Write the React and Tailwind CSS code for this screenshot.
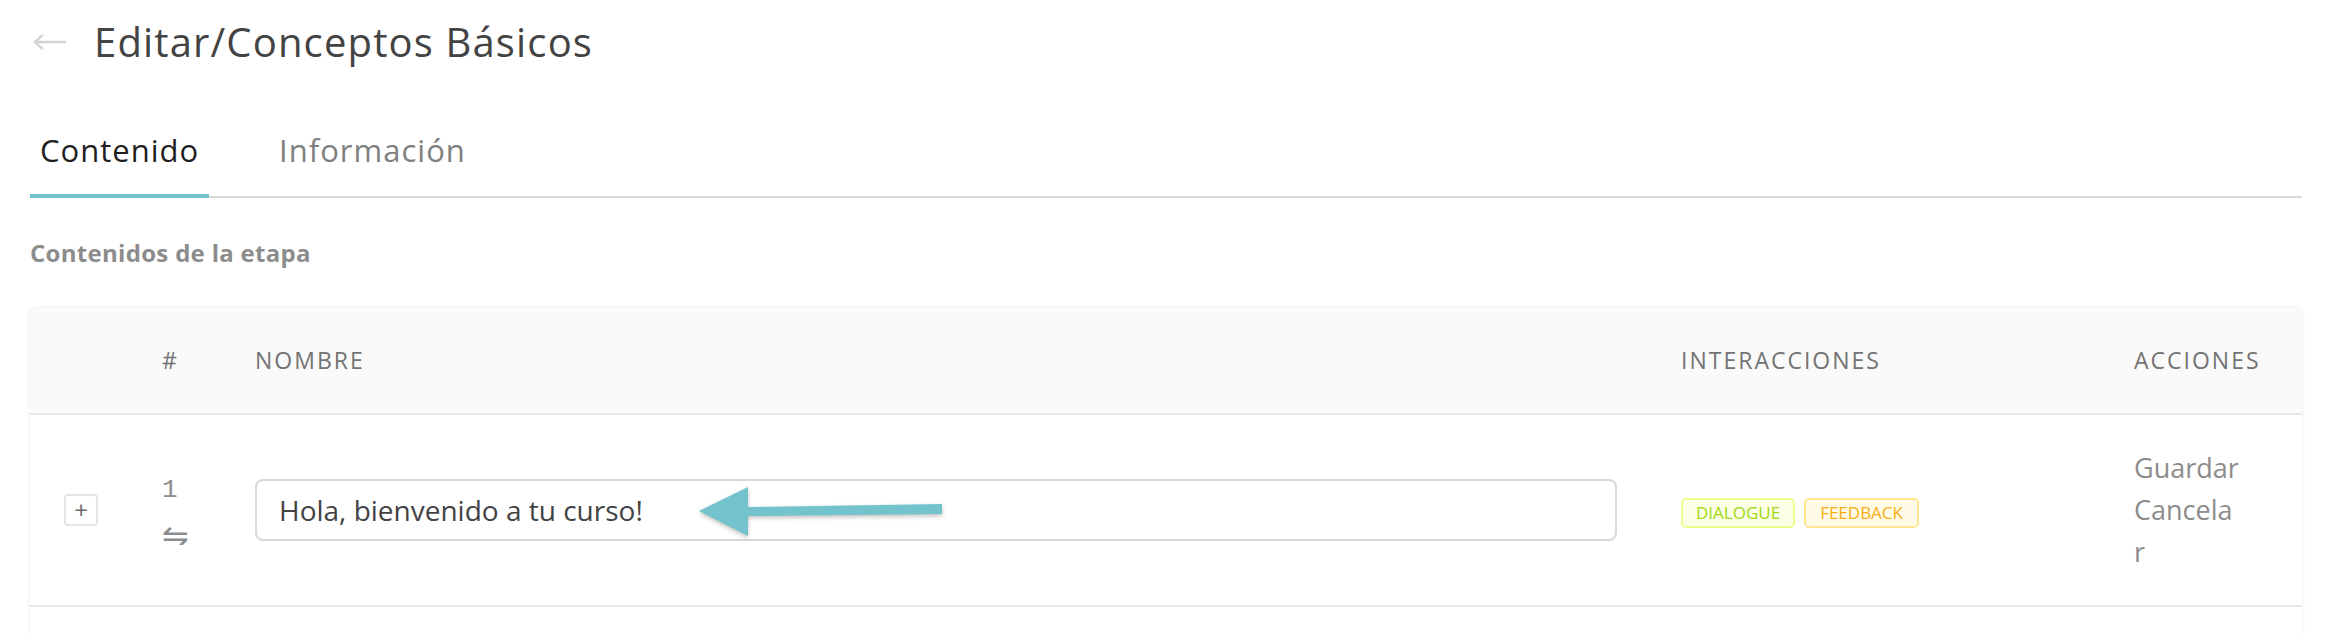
import React from "react";

function BackArrow() {
  return (
    <svg width="34" height="16" viewBox="0 0 34 16" fill="none" stroke="#d4d4d4" strokeWidth="2.4" strokeLinecap="round">
      <path d="M2 8 H32" />
      <path d="M9 1.5 L2 8 L9 14.5" />
    </svg>
  );
}

function Annotation() {
  // teal arrow pointing at the input text
  return (
    <svg
      className="absolute left-[440px] top-0 drop-shadow-[0_2px_2px_rgba(0,0,0,0.25)]"
      width="260"
      height="62"
      viewBox="0 0 260 62"
    >
      <polygon points="4,32 53,8 53,28 247,25 247,35 53,37 53,57" fill="#72c3cb" />
    </svg>
  );
}

export default function App() {
  return (
    <div className="min-h-screen bg-white pl-[30px] pr-[28px] font-['Open_Sans',sans-serif]">
      {/* header */}
      <div className="flex h-[84px] items-center">
        <div className="ml-[3px] flex w-[34px] items-center">
          <BackArrow />
        </div>
        <h1 className="ml-[27px] text-[40px] leading-none tracking-[1.15px] text-[#434343]">
          Editar/Conceptos Básicos
        </h1>
      </div>

      {/* tabs */}
      <div className="flex h-[114px] items-end gap-[60px] border-b-2 border-[#d9d9d9]">
        <div className="-mb-[2px] border-b-4 border-[#72c3cb] px-[10px] pb-[24px] text-[31px] leading-[40px] tracking-[1px] text-[#1f1f1f]">
          Contenido
        </div>
        <div className="-mb-[2px] border-b-4 border-transparent px-[10px] pb-[24px] text-[31px] leading-[40px] tracking-[1px] text-[#808080]">
          Información
        </div>
      </div>

      {/* section title */}
      <div className="mt-[40px] text-[24px] font-bold leading-[30px] tracking-[0.3px] text-[#8c8c8c]">
        Contenidos de la etapa
      </div>

      {/* table */}
      <div className="mt-[40px] rounded-t-[6px] bg-white shadow-[0_0_5px_rgba(0,0,0,0.09)]">
        <div className="grid h-[107px] grid-cols-[100px_93px_1426px_453px_1fr] items-center rounded-t-[6px] border-b-2 border-[#e8e8e8] bg-[#fafafa] text-[23px] tracking-[2px] text-[#737373]">
          <div />
          <div className="px-8">#</div>
          <div className="px-8">NOMBRE</div>
          <div className="px-8">INTERACCIONES</div>
          <div className="px-8">ACCIONES</div>
        </div>

        <div className="grid h-[192px] grid-cols-[100px_93px_1426px_453px_1fr] items-center border-b-2 border-[#e8e8e8]">
          <div className="pl-[34px]">
            <button className="flex h-[32px] w-[34px] items-center justify-center rounded-[4px] border-2 border-[#e4e4e4] bg-white text-[24px] leading-none text-[#6b6b6b]">
              +
            </button>
          </div>
          <div className="flex flex-col px-8 text-[#8c8c8c]">
            <span className="font-['Liberation_Mono',monospace] text-[26px] leading-[30px]">1</span>
            <span className="mt-[16px] h-[24px] overflow-hidden font-['DejaVu_Sans',sans-serif] text-[32px] leading-[30px]">⇋</span>
          </div>
          <div className="px-8">
            <div className="relative">
              <input
                readOnly
                value="Hola, bienvenido a tu curso!"
                className="h-[62px] w-full rounded-[8px] border-2 border-[#d9d9d9] bg-white px-[22px] text-[28px] text-[#434343] outline-none"
              />
              <Annotation />
            </div>
          </div>
          <div className="mt-[6px] flex gap-[9px] px-8">
            <span className="rounded-[5px] border-2 border-[#eaff8f] bg-[#fcffe6] px-[13px] text-[17px] leading-[26px] text-[#a0d911]">
              DIALOGUE
            </span>
            <span className="rounded-[5px] border-2 border-[#ffe58f] bg-[#fffbe6] px-[14px] text-[17px] leading-[26px] text-[#faad14]">
              FEEDBACK
            </span>
          </div>
          <div className="px-8">
            <div className="w-[107px] break-all text-[27px] leading-[42px] text-[#8c8c8c]">
              <div>Guardar</div>
              <div>Cancelar</div>
            </div>
          </div>
        </div>

        <div className="h-[60px]" />
      </div>
    </div>
  );
}
